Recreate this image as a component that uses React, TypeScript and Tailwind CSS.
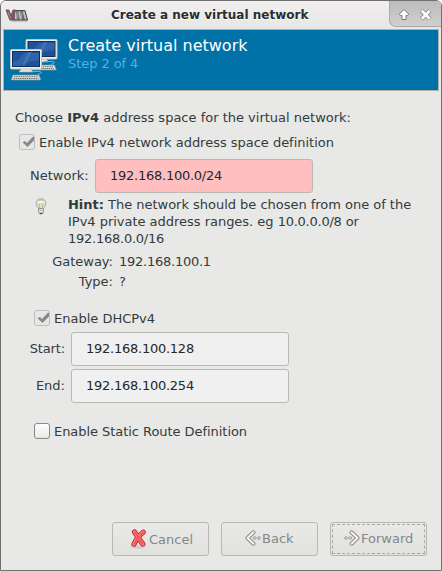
import React from "react";

function Logo() {
  return (
    <svg width="23" height="15" viewBox="0 0 23 15">
      <path d="M5 12.500h17.500v1H7z" fill="#555" opacity=".45" />
      <path d="M8 12L7.300 9L9.500 2.500H20L22.500 12Z" fill="#6b6b6b" stroke="#4d4d4d" strokeWidth="1" />
      <path d="M10.300 3.300L11 11.300M14.200 3.300L15.600 11.300M18.600 3.300L20.600 11.300" stroke="#c3c3c3" strokeWidth="1.700" />
      <path d="M11.800 11.300L13 4.500M16.300 11.300L17 4.500" stroke="#a0a0a0" strokeWidth="1" />
      <path d="M1 2H3.900L6 7.500L8 2H10.500L8 12H4.800Z" fill="#8c5364" stroke="#65575b" strokeWidth=".9" />
      <path d="M3 4L5.500 10.500" stroke="#a9a2a4" strokeWidth=".8" />
    </svg>
  );
}

function Computer({ x, y }: { x: number; y: number }) {
  return (
    <g transform={`translate(${x} ${y})`}>
      <path d="M12 19h8l3 4H9z" fill="#e4e4de" stroke="#aeb0aa" strokeWidth=".6" />
      <rect x=".5" y=".5" width="31" height="19.5" rx="1" fill="#f2f2ec" stroke="#c4c4bd" />
      <rect x="2.500" y="2.500" width="27" height="15" fill="#1d529b" stroke="#0b2f62" />
      <path d="M3 12L8 11L14 4h15v7L18 13L10 17H3z" fill="#3f72b8" opacity=".5" />
      <path d="M18 3h4l-7 14h-3z" fill="#6a91c5" opacity=".35" />
      <path d="M3 26h26l1.800 5H1z" fill="#e0e0da" stroke="#8c908b" strokeWidth=".7" />
      <path d="M4 27.700h24M3.500 29.500h25" stroke="#70746f" strokeWidth="1" strokeDasharray="1.500 .7" />
    </g>
  );
}

function Computers() {
  return (
    <svg width="48" height="44" viewBox="0 0 48 44">
      <Computer x={15.5} y={0} />
      <path d="M34 22.500h9q3 1 0 2t-2 2" fill="none" stroke="#65b2d2" />
      <Computer x={0} y={10} />
      <path d="M22 32.500h8q3 1 0 2t-3 2" fill="none" stroke="#65b2d2" />
    </svg>
  );
}

function Bulb() {
  return (
    <svg width="12" height="17" viewBox="0 0 12 17">
      <path d="M3.800 10.500L1.300 7.200Q.2 1 6 .8q5.700 .2 4.600 6.400L8.200 10.500z" fill="#dededa" stroke="#a9a9a3" />
      <path d="M2.500 2.600Q6 .8 9.500 2.600" fill="none" stroke="#b8b8b2" />
      <path d="M2 5.400h8" stroke="#efe36a" strokeWidth="1.600" />
      <path d="M2.500 4h7" stroke="#fffad0" strokeWidth="1.300" />
      <path d="M4.500 6v5M7.500 6v5" stroke="#adada7" strokeWidth=".8" />
      <path d="M3.500 10.500h5v4L7 16H5l-1.500-1.500z" fill="#b4b4b0" stroke="#888983" strokeWidth=".7" />
      <path d="M4 12.200l4-.6M4 14.200l4-.6" stroke="#eee" />
      <path d="M4.800 15.500h2.500" stroke="#444" strokeWidth="1.200" />
    </svg>
  );
}

function Check({ checked }: { checked?: boolean }) {
  return (
    <span className={`block size-4 shrink-0 rounded-[3px] border ${checked ? "border-[#bdbebc] bg-[#e7e7e6]" : "border-[#888986] bg-linear-to-b from-white to-[#e8e8e7]"}`}>
      {checked && (
        <svg width="14" height="14" viewBox="0 0 14 14">
          <path d="M2.500 7.200L5 6L7 8L12.800 1.800H14V5.500L7.500 12Z" fill="#868989" />
        </svg>
      )}
    </span>
  );
}

function Field({ value, invalid }: { value: string; invalid?: boolean }) {
  return (
    <div className={`flex h-[34px] w-[218px] items-center rounded-[3px] border pb-px pl-[14px] tracking-[-0.25px] text-[#24282a] ${invalid ? "border-[#bcb8b6] bg-[#ffbfbf]" : "border-[#b8b8b7] bg-[#f0f0f0]"}`}>
      {value}
    </div>
  );
}

function Arrow({ back }: { back?: boolean }) {
  return (
    <svg width="16" height="16" viewBox="0 0 16 16" className={back ? "" : "-scale-x-100"}>
      <path d="M8.500 2.300L2.500 8L8.500 13.700" fill="none" stroke="#858684" strokeWidth="4" strokeLinecap="round" strokeLinejoin="round" />
      <path d="M8.500 2.300L2.500 8L8.500 13.700" fill="none" stroke="#f5f5f4" strokeWidth="2.200" strokeLinecap="round" strokeLinejoin="round" />
      <circle cx="9.800" cy="8" r="1.300" fill="#eee" stroke="#90918f" strokeWidth=".9" />
      <circle cx="14" cy="8" r="1.300" fill="#eee" stroke="#90918f" strokeWidth=".9" />
    </svg>
  );
}

function CancelIcon() {
  return (
    <svg width="18" height="20" viewBox="0 0 18 20">
      <ellipse cx="8" cy="18" rx="8" ry="1.700" fill="#aaa" opacity=".35" />
      <path d="M4.500 3L8.500 9L12.800 15M13.200 3.200Q7 8 4 15.200" fill="none" stroke="#b8282e" strokeWidth="5.200" strokeLinecap="round" />
      <path d="M4.500 3L8.500 9L12.800 15M13.200 3.200Q7 8 4 15.200" fill="none" stroke="#fb7c7c" strokeWidth="3.400" strokeLinecap="round" />
      <path d="M5 3.500L12.300 14.500M12.700 3.700Q7 9 4.500 14.700" fill="none" stroke="#f55459" strokeWidth="1.700" strokeLinecap="round" />
    </svg>
  );
}

const button = "flex h-[34px] w-[97px] items-center rounded-[3px] border border-[#b7b8b6] bg-linear-to-b from-[#e9e9e8] to-[#e1e1e0] text-[#858887]";

export default function App() {
  return (
    <div className="h-[571px] w-[442px] bg-white font-['DejaVu_Sans',sans-serif] text-[13px] leading-[17px] whitespace-nowrap text-[#343b3d]">
      <div className="flex h-full flex-col overflow-hidden rounded-t-[6px] border border-[#707070] bg-[#e8e8e6]">
        <header className="flex h-7 shrink-0 bg-linear-to-b from-[#f1efef] to-[#e6e6e4]">
          <div className="w-[30px] pt-[7px] pl-1"><Logo /></div>
          <h1 className="flex-1 pt-[6px] pl-[80px] text-[12px] leading-4 font-bold text-[#292d2e] [text-shadow:0_1px_white]">Create a new virtual network</h1>
          <div className="flex h-[26px] w-[52px] rounded-bl-[7px] border-b border-l border-[#aaa] bg-linear-to-b from-[#bcbcbc] to-[#d0d0cf] pt-[7px] pl-[9px]">
            <svg width="36" height="14" viewBox="0 0 36 14">
              <path d="M5 1.500L9.700 6.200L8.500 7.500H7V11.500H3V7.500H1.500L.3 6.200Z" fill="#fff" stroke="#777" strokeWidth="1" strokeLinejoin="round" />
              <path d="M22.500 2.500L31 11M31 2.500L22.500 11" stroke="#888" strokeWidth="4.400" />
              <path d="M22.800 2.800L30.700 10.700M30.700 2.800L22.800 10.700" stroke="white" strokeWidth="2.700" />
            </svg>
          </div>
        </header>
        <section className="mx-0.5 flex h-[62px] shrink-0 border border-[#b0b0ac] bg-[#0072a8]">
          <div className="w-[64px] pt-[9px] pl-[6px]"><Computers /></div>
          <div className="pt-[6px]">
            <h2 className="text-[16px] leading-5 text-white">Create virtual network</h2>
            <p className="-mt-px tracking-[-0.07px] text-[#54afe6]">Step 2 of 4</p>
          </div>
        </section>
        <main className="flex flex-1 flex-col pl-[14px]">
          <p className="mt-[18px]">Choose <b>IPv4</b> address space for the virtual network:</p>
          <div className="mt-[8px] flex h-4 gap-1 pl-1"><Check checked /><span className="tracking-[-0.02px]">Enable IPv4 network address space definition</span></div>
          <div className="mt-[9px] flex items-center"><span className="w-20 pb-px pl-[15px]">Network:</span><Field value="192.168.100.0/24" invalid /></div>
          <div className="mt-[3px] flex">
            <div className="w-[53px] pt-[2px] pl-5"><Bulb /></div>
            <p className="tracking-[-0.02px]"><b>Hint:</b> The network should be chosen from one of the<br />IPv4 private address ranges. eg <span className="tracking-[-0.25px]">10.0.0.0/8</span> or<br /><span className="tracking-[-0.25px]">192.168.0.0/16</span></p>
          </div>
          <dl className="mt-[6px] grid grid-cols-[98px_auto] gap-x-[6px] gap-y-[3px]">
            <dt className="text-right">Gateway:</dt><dd className="tracking-[-0.25px]">192.168.100.1</dd>
            <dt className="text-right">Type:</dt><dd>?</dd>
          </dl>
          <div className="mt-[20px] flex h-4 gap-1 pl-[19px]"><Check checked /><span>Enable DHCPv4</span></div>
          <div className="mt-[6px] grid grid-cols-[50px_218px] items-center gap-x-[6px] gap-y-[3px]">
            <span className="pb-px text-right tracking-[-0.15px]">Start:</span><Field value="192.168.100.128" />
            <span className="pb-px text-right">End:</span><Field value="192.168.100.254" />
          </div>
          <div className="mt-5 flex h-4 gap-1 pl-[19px]"><Check /><span className="tracking-[-0.05px]">Enable Static Route Definition</span></div>
          <footer className="mt-auto mb-[14px] flex gap-3 pl-[97px]">
            <div className={`${button} gap-px pl-[17px]`}><span className="pb-px"><CancelIcon /></span><span>Cancel</span></div>
            <div className={`${button} gap-[1px] pl-[23px]`}><span className="pb-[3px]"><Arrow back /></span><span className="pb-[2px]">Back</span></div>
            <div className={`${button} p-px`}><div className="flex h-full w-full items-center gap-[1px] border border-dashed border-[#aaa] pl-[11px]"><span className="pb-[3px]"><Arrow /></span><span className="pb-[2px]">Forward</span></div></div>
          </footer>
        </main>
      </div>
    </div>
  );
}
